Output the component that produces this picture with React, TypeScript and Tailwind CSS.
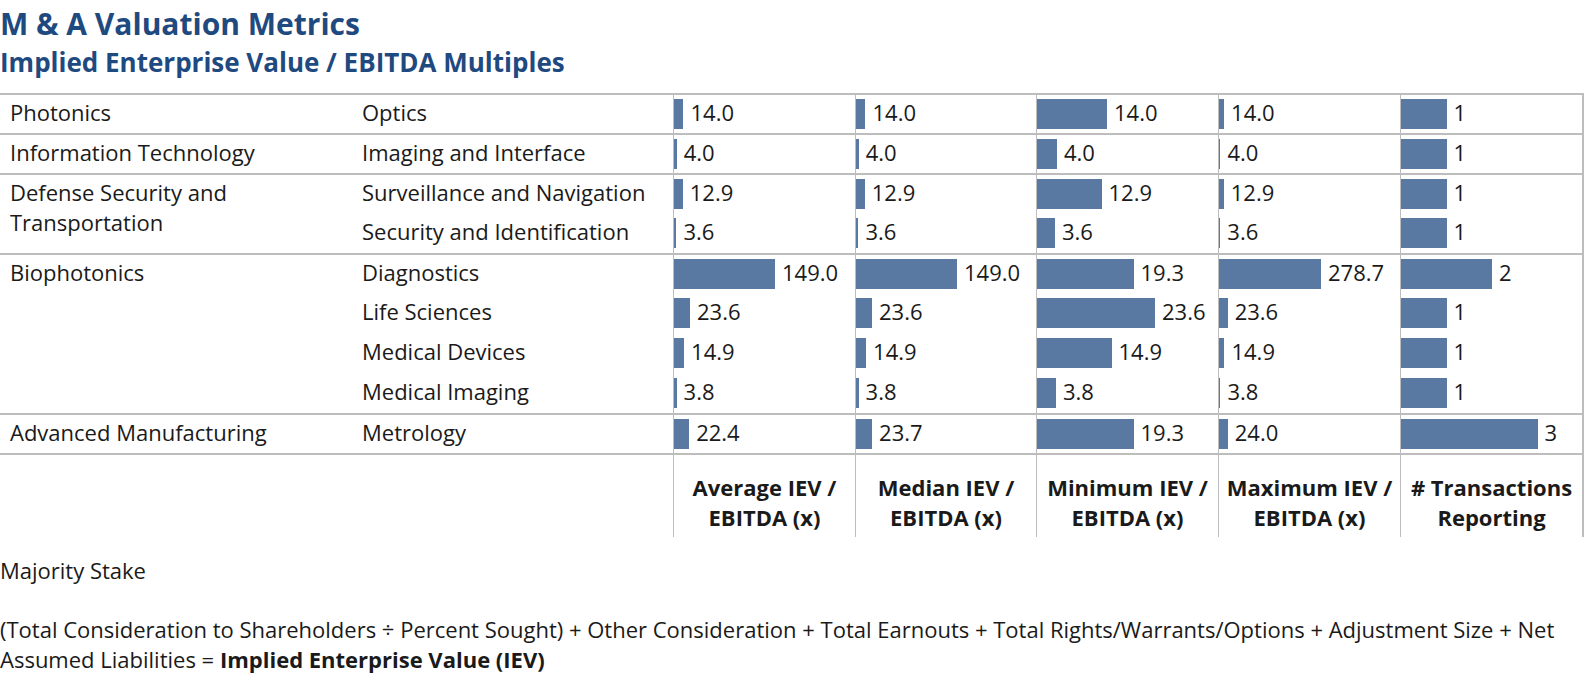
import React from 'react'

type Sub = {
  name: string
  values: number[] // avg, median, min, max, transactions
}

type Group = {
  category: string
  subs: Sub[]
}

const groups: Group[] = [
  { category: 'Photonics', subs: [{ name: 'Optics', values: [14.0, 14.0, 14.0, 14.0, 1] }] },
  {
    category: 'Information Technology',
    subs: [{ name: 'Imaging and Interface', values: [4.0, 4.0, 4.0, 4.0, 1] }],
  },
  {
    category: 'Defense Security and Transportation',
    subs: [
      { name: 'Surveillance and Navigation', values: [12.9, 12.9, 12.9, 12.9, 1] },
      { name: 'Security and Identification', values: [3.6, 3.6, 3.6, 3.6, 1] },
    ],
  },
  {
    category: 'Biophotonics',
    subs: [
      { name: 'Diagnostics', values: [149.0, 149.0, 19.3, 278.7, 2] },
      { name: 'Life Sciences', values: [23.6, 23.6, 23.6, 23.6, 1] },
      { name: 'Medical Devices', values: [14.9, 14.9, 14.9, 14.9, 1] },
      { name: 'Medical Imaging', values: [3.8, 3.8, 3.8, 3.8, 1] },
    ],
  },
  {
    category: 'Advanced Manufacturing',
    subs: [{ name: 'Metrology', values: [22.4, 23.7, 19.3, 24.0, 3] }],
  },
]

// px per unit, each column has its own axis
const scales = [0.678, 0.678, 5.0, 0.366, 45.5]

const headers = [
  ['Average IEV /', 'EBITDA (x)'],
  ['Median IEV /', 'EBITDA (x)'],
  ['Minimum IEV /', 'EBITDA (x)'],
  ['Maximum IEV /', 'EBITDA (x)'],
  ['# Transactions', 'Reporting'],
]

// first row loses 2px to the group's top rule
const rowTemplates: Record<number, string> = {
  1: 'grid-rows-[38px]',
  2: 'grid-rows-[38px_40px]',
  4: 'grid-rows-[38px_40px_40px_40px]',
}

const cols = 'grid-cols-[352px_321px_182px_181px_182px_182px_182px]'

function BarCell({ value, col }: { value: number; col: number }) {
  const label = col === 4 ? String(value) : value.toFixed(1)
  return (
    <div className="flex items-center border-l border-[#bdbdbd]">
      <div className="h-[30px] bg-[#5a79a2]" style={{ width: value * scales[col] }} />
      <span className="mb-1 ml-[7px]">{label}</span>
    </div>
  )
}

export default function App() {
  return (
    <div className="w-[1586px] bg-white text-[22px] leading-[30px] text-[#1a1a1a] font-['Open_Sans',sans-serif]">
      <h1 className="pt-[5px] text-[30px] leading-[38px] font-bold text-[#1f4a80]">M &amp; A Valuation Metrics</h1>
      <h2 className="mt-[2px] text-[26px] leading-[34px] font-bold text-[#1f4a80]">
        Implied Enterprise Value / EBITDA Multiples
      </h2>

      <div className="mt-[14px] w-[1584px] border-r-2 border-[#bdbdbd]">
        {groups.map((g) => (
          <div key={g.category} className={`grid border-t-2 border-[#bdbdbd] ${cols} ${rowTemplates[g.subs.length]}`}>
            <div
              className="pl-[10px] pr-4 pt-[2px]"
              style={{ gridRow: `1 / span ${g.subs.length}` }}
            >
              {g.category}
            </div>
            {g.subs.map((s, i) => (
              <React.Fragment key={s.name}>
                <div className="col-start-2 flex items-center pb-1 pl-[10px]" style={{ gridRow: i + 1 }}>
                  {s.name}
                </div>
                {s.values.map((v, c) => (
                  <BarCell key={c} value={v} col={c} />
                ))}
              </React.Fragment>
            ))}
          </div>
        ))}

        <div className={`grid h-[84px] border-t-2 border-[#bdbdbd] ${cols}`}>
          <div />
          <div />
          {headers.map((h) => (
            <div key={h[0]} className="border-l border-[#bdbdbd] pt-[17px] text-center leading-[30px] font-bold">
              <div>{h[0]}</div>
              <div>{h[1]}</div>
            </div>
          ))}
        </div>
      </div>

      <p className="mt-[18px]">Majority Stake</p>
      <p className="mt-[29px]">
        <span className="whitespace-nowrap">
          (Total Consideration to Shareholders ÷ Percent Sought) + Other Consideration + Total Earnouts + Total
          Rights/Warrants/Options + Adjustment Size + Net
        </span>
        <br />
        Assumed Liabilities = <strong className="font-bold">Implied Enterprise Value (IEV)</strong>
      </p>
    </div>
  )
}
